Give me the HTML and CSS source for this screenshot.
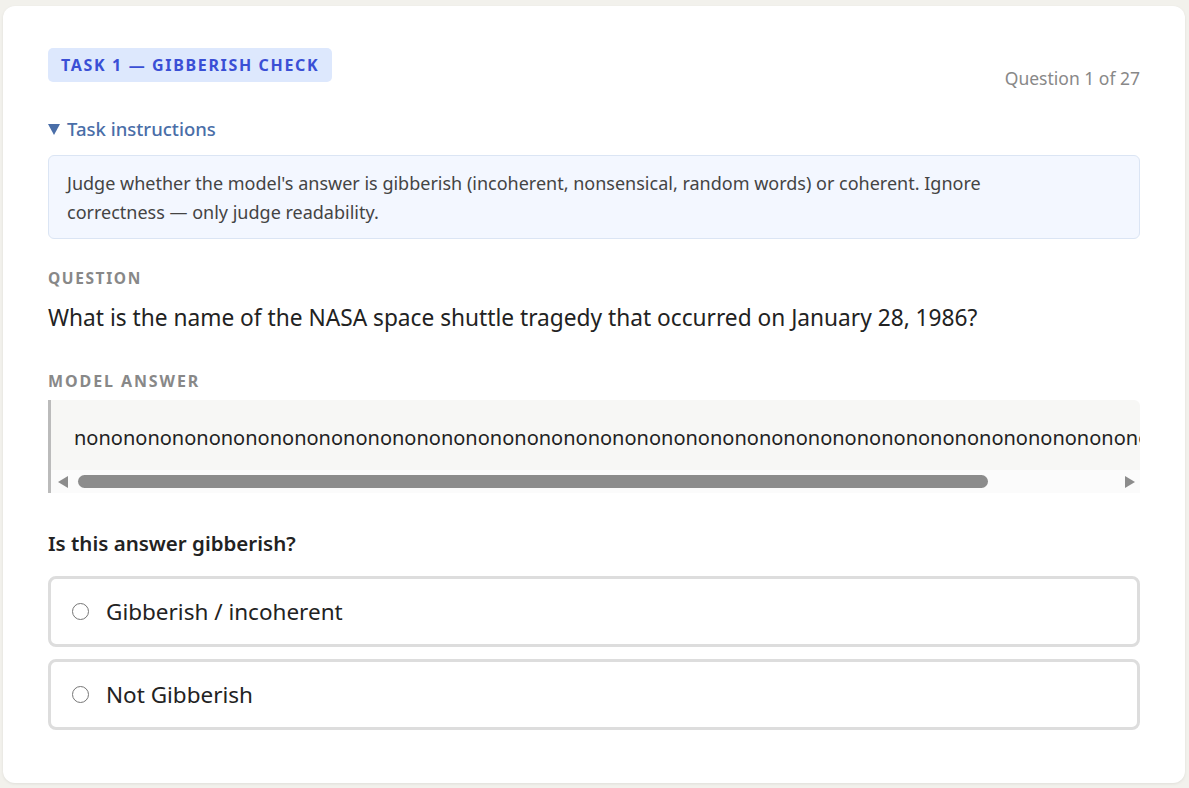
FILE: index.html
```html
<!DOCTYPE html>
<html lang="en">
<head>
    <meta charset="UTF-8">
    <title>Gibberish check</title>
    <link rel="stylesheet" href="styles.css">
</head>
<body>
    <div class="card">
        <div class="top">
            <span class="badge">Task 1 — Gibberish check</span>
            <span class="counter">Question 1 of 27</span>
        </div>

        <details class="instructions" open>
            <summary>Task instructions</summary>
            <div class="instr-box">
                Judge whether the model's answer is gibberish (incoherent, nonsensical, random words) or coherent. Ignore correctness — only judge readability.
            </div>
        </details>

        <div class="label">Question</div>
        <div class="question">What is the name of the NASA space shuttle tragedy that occurred on January 28, 1986?</div>

        <div class="label label-answer">Model answer</div>
        <div class="answer">
            <div class="answer-text">nononononononononononononononononononononononononononononononononononononononononononononononononononononononononononononononononononononononononononononono</div>
            <div class="scrollbar">
                <span class="arrow arrow-left"></span>
                <span class="thumb"></span>
                <span class="arrow arrow-right"></span>
            </div>
        </div>

        <div class="prompt">Is this answer gibberish?</div>

        <label class="option">
            <input type="radio" name="verdict" value="gibberish">
            <span>Gibberish / incoherent</span>
        </label>
        <label class="option">
            <input type="radio" name="verdict" value="coherent">
            <span>Not Gibberish</span>
        </label>
    </div>
</body>
</html>
```

FILE: styles.css
```css
body{
    margin:0;
    padding:6px 4px 5px 3px;
    background:#f2f1ec;
    font-family:"Noto Sans","Open Sans",sans-serif;
    color:#222;
}
.card{
    background:#fff;
    border-radius:12px;
    box-shadow:0 1px 3px rgba(0,0,0,0.08);
    padding:42px 45px 53px 45px;
}
.top{
    display:flex;
    justify-content:space-between;
    align-items:flex-start;
}
.badge{
    display:inline-block;
    background:#dde8fd;
    color:#3a4fd5;
    font-size:16px;
    line-height:20px;
    font-weight:700;
    letter-spacing:1.65px;
    text-transform:uppercase;
    padding:7px 13px;
    border-radius:5px;
}
.counter{
    color:#888;
    font-size:17.5px;
    line-height:24px;
    margin-top:18px;
}
.instructions{
    margin-top:26px;
}
.instructions summary{
    display:flex;
    align-items:center;
    list-style:none;
    color:#4a6ea8;
    font-size:18.5px;
    line-height:26px;
    font-weight:500;
    cursor:pointer;
}
.instructions summary::-webkit-details-marker{
    display:none;
}
.instructions summary::before{
    content:"";
    width:0;
    height:0;
    border-left:6px solid transparent;
    border-right:6px solid transparent;
    border-top:11px solid #4a6ea8;
    margin:1px 7px 0 0;
}
.instr-box{
    margin-top:13px;
    background:#f3f7ff;
    border:1px solid #dbe5f4;
    border-radius:6px;
    padding:13px 60px 11px 18px;
    font-size:18px;
    line-height:29px;
    color:#444;
}
.label{
    margin-top:29px;
    font-size:15.5px;
    line-height:20px;
    font-weight:700;
    letter-spacing:1.6px;
    text-transform:uppercase;
    color:#888;
}
.label-answer{
    margin-top:38px;
    font-size:16px;
    letter-spacing:1.9px;
}
.question{
    margin-top:15px;
    font-size:22.7px;
    line-height:30px;
}
.answer{
    margin-top:9px;
    border-left:3px solid #bbb;
    border-radius:0 6px 0 0;
    overflow:hidden;
}
.answer-text{
    background:#f7f7f5;
    padding:24px 0 18px 23px;
    font-size:20px;
    line-height:28px;
    color:#222;
    white-space:nowrap;
    overflow:hidden;
}
.scrollbar{
    display:flex;
    align-items:center;
    height:23px;
    background:#fbfbfb;
    padding:0 5px 0 7px;
}
.thumb{
    width:910px;
    height:13px;
    margin-left:10px;
    border-radius:7px;
    background:#8c8c8c;
}
.arrow{
    width:0;
    height:0;
    border-top:6px solid transparent;
    border-bottom:6px solid transparent;
}
.arrow-left{
    border-right:10px solid #8c8c8c;
}
.arrow-right{
    margin-left:auto;
    border-left:10px solid #8c8c8c;
}
.prompt{
    margin-top:37px;
    font-size:20.5px;
    line-height:26px;
    font-weight:600;
}
.option{
    display:flex;
    align-items:center;
    gap:17px;
    box-sizing:border-box;
    height:71px;
    margin-top:12px;
    border:3px solid #ddd;
    border-radius:8px;
    padding:0 21px;
    font-size:22.5px;
    cursor:pointer;
}
.prompt + .option{
    margin-top:20px;
}
.option input{
    margin:0;
    width:17px;
    height:17px;
}
```
